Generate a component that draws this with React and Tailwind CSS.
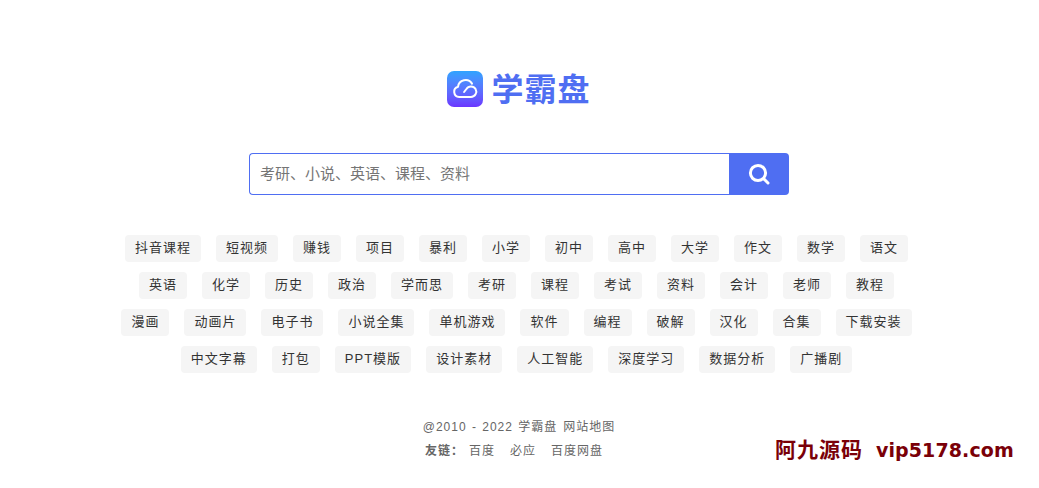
const rows = [
  ["抖音课程", "短视频", "赚钱", "项目", "暴利", "小学", "初中", "高中", "大学", "作文", "数学", "语文"],
  ["英语", "化学", "历史", "政治", "学而思", "考研", "课程", "考试", "资料", "会计", "老师", "教程"],
  ["漫画", "动画片", "电子书", "小说全集", "单机游戏", "软件", "编程", "破解", "汉化", "合集", "下载安装"],
  ["中文字幕", "打包", "PPT模版", "设计素材", "人工智能", "深度学习", "数据分析", "广播剧"],
];

const font = "font-['Liberation_Sans','Noto_Sans_CJK_SC',sans-serif]";

function Logo() {
  return (
    <div className="flex items-center justify-center gap-[8px] h-[37px]">
      <div className="w-[36px] h-[36px] rounded-[7px] bg-gradient-to-b from-[#2ea3ff] to-[#6a35ff] flex items-center justify-center">
        <svg width="28" height="28" viewBox="0 0 28 28" fill="none" stroke="#fff" strokeWidth="2" strokeLinecap="round" strokeLinejoin="round">
          <path d="M14 22H8.2a5.2 5.2 0 0 1-1.2-10.2 7.6 7.6 0 0 1 14-3.2" />
          <path d="M14 22h6a5.3 5.3 0 1 0-4.6-8l-2.3 3" />
        </svg>
      </div>
      <span className="text-[32px] leading-[37px] pt-[3px] tracking-[1px] font-bold text-[#4f6ef2]">学霸盘</span>
    </div>
  );
}

function Search() {
  return (
    <div className="flex w-[540px] h-[42px] mx-auto mt-[46px]">
      <input
        placeholder="考研、小说、英语、课程、资料"
        className="flex-1 min-w-0 border border-[#4f6ef2] border-r-0 rounded-l-[4px] px-[10px] text-[15px] outline-none placeholder:text-[#757575]"
      />
      <button className="w-[60px] bg-[#4f6ef2] rounded-r-[4px] flex items-center justify-center">
        <svg width="24" height="24" viewBox="0 0 24 24" fill="none" stroke="#fff" strokeWidth="3" strokeLinecap="round">
          <circle cx="11" cy="11" r="7.6" />
          <path d="M17 17l4 4" />
        </svg>
      </button>
    </div>
  );
}

export default function App() {
  return (
    <div className={`relative h-[488px] bg-white overflow-hidden pt-[70px] pr-[1px] ${font}`}>
      <Logo />
      <Search />

      <div className="mt-[40px] flex flex-col gap-[10px] pr-[5px]">
        {rows.map((row, i) => (
          <div key={i} className="flex justify-center gap-[15px]">
            {row.map((t) => (
              <a key={t} className="h-[27px] leading-[26px] px-[10px] rounded-[4px] bg-[#f5f5f5] text-[13px] tracking-[1px] text-[#333]">
                {t}
              </a>
            ))}
          </div>
        ))}
      </div>

      <div className="mt-[42px] text-center text-[12px] leading-[24px] tracking-[1px] text-[#666]">
        <div className="flex justify-center gap-[6px]">
          <span className="[word-spacing:1px]">@2010 - 2022 学霸盘</span>
          <span>网站地图</span>
        </div>
        <div className="flex justify-center pr-[10px]">
          <span className="font-bold mr-[5px]">友链：</span>
          <div className="flex gap-[15px]">
            <span>百度</span>
            <span>必应</span>
            <span>百度网盘</span>
          </div>
        </div>
      </div>

      <div className="absolute left-[775px] top-[436px] flex items-center gap-[13px] font-['DejaVu_Sans','Noto_Sans_CJK_SC',sans-serif] font-bold text-[#7a0008] leading-[28px]">
        <span className="text-[21px] tracking-[1px]">阿九源码</span>
        <span className="text-[19px] tracking-[0.1px]">vip5178.com</span>
      </div>
    </div>
  );
}
